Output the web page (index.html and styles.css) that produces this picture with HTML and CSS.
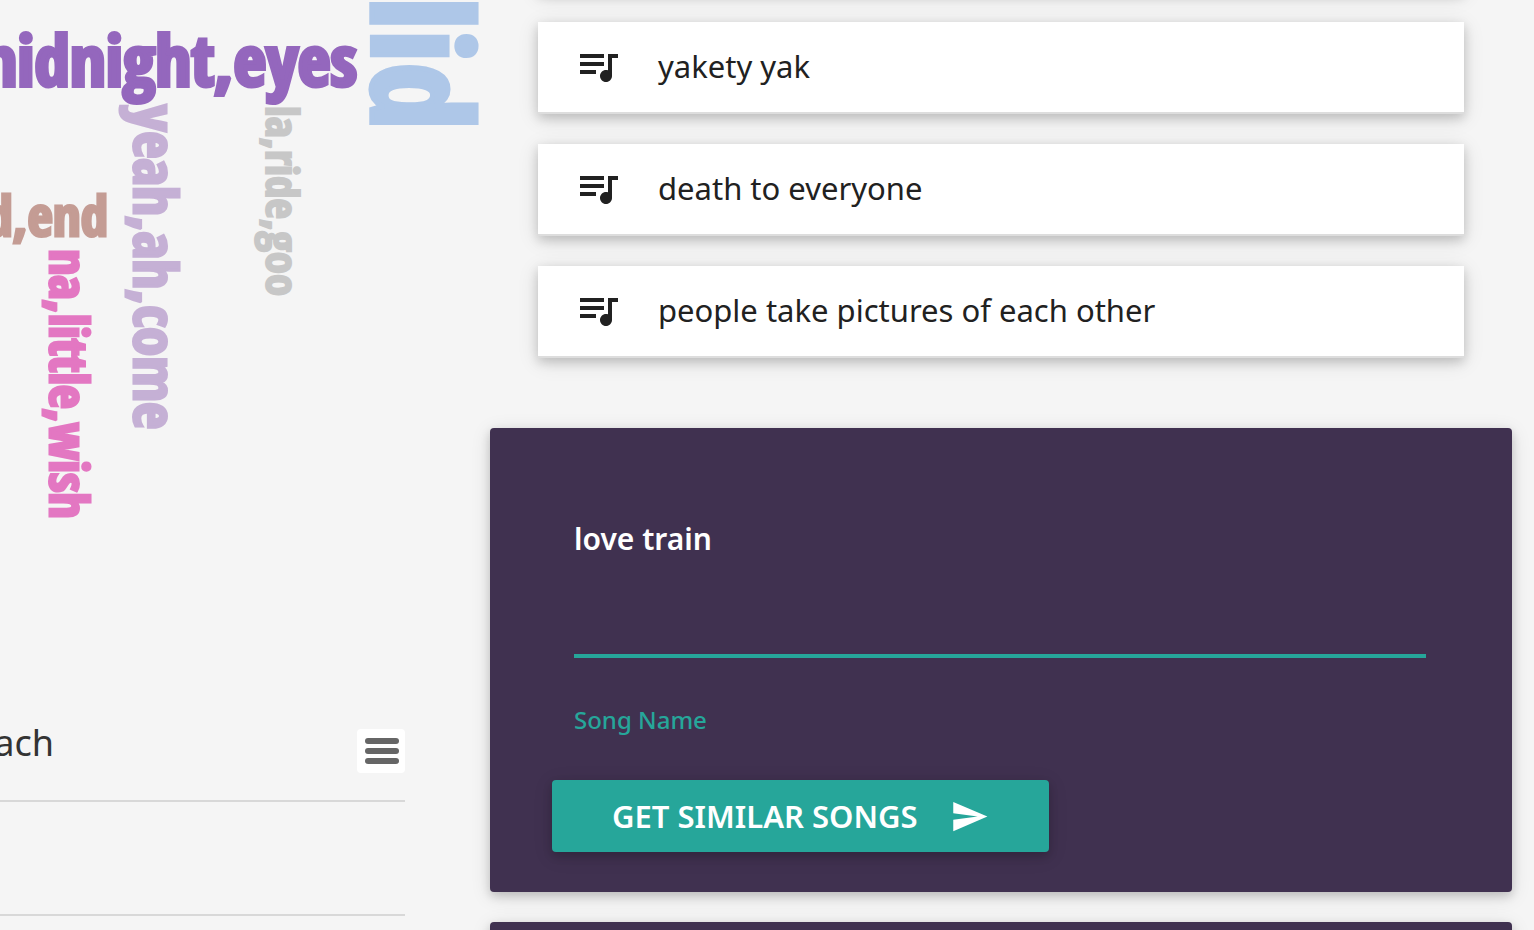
FILE: index.html
```html
<!DOCTYPE html>
<html lang="en">
<head>
<meta charset="utf-8">
<meta name="viewport" content="width=device-width, initial-scale=1">
<title>Similar songs</title>
<link rel="stylesheet" href="styles.css">
</head>
<body>
<svg class="sprite" aria-hidden="true">
  <symbol id="queue" viewBox="0 0 24 24"><path d="M15 6H3v2h12V6zm0 4H3v2h12v-2zM3 16h8v-2H3v2zM17 6v8.18c-.31-.11-.65-.18-1-.18-1.66 0-3 1.34-3 3s1.34 3 3 3 3-1.34 3-3V8h3V6h-5z"/></symbol>
  <symbol id="send" viewBox="0 0 24 24"><path d="M2.01 21L23 12 2.01 3 2 10l15 2-15 2z"/></symbol>
</svg>
<main class="page">
  <section class="insights">
    <svg class="cloud" width="490" height="702" role="img" aria-label="Lyric topics">
      <text class="word purple" x="357" y="86" text-anchor="end">midnight,eyes</text>
      <text class="word brown" x="108" y="236" text-anchor="end">d,end</text>
      <text class="word blue" transform="translate(372 130) rotate(90)" text-anchor="end">lid</text>
      <text class="word lilac" transform="translate(134 105) rotate(90)">yeah,ah,come</text>
      <text class="word grey" transform="translate(266 106) rotate(90)">la,ride,goo</text>
      <text class="word pink" transform="translate(50 249) rotate(90)">na,little,wish</text>
    </svg>
    <div class="chart">
      <header class="chart-head">
        <h2 class="chart-title">ach</h2>
        <button class="menu" type="button" aria-label="Chart menu"><span class="bar"></span><span class="bar"></span><span class="bar"></span></button>
      </header>
      <div class="grid-row"></div>
      <div class="grid-row"></div>
    </div>
  </section>
  <section class="songs">
    <ul class="song-list">
      <li class="song"></li>
      <li class="song"><svg class="song-icon"><use href="#queue"/></svg><span>yakety yak</span></li>
      <li class="song"><svg class="song-icon"><use href="#queue"/></svg><span>death to everyone</span></li>
      <li class="song"><svg class="song-icon"><use href="#queue"/></svg><span>people take pictures of each other</span></li>
    </ul>
    <form class="panel">
      <div class="field">
        <input class="field-input" id="song" type="text" value="love train">
        <label class="field-label" for="song">Song Name</label>
      </div>
      <button class="submit" type="button"><span>GET SIMILAR SONGS</span><svg class="send-icon"><use href="#send"/></svg></button>
    </form>
    <div class="panel"></div>
  </section>
</main>
</body>
</html>
```
FILE: styles.css
```css
* { box-sizing: border-box; }

body {
  margin: 0;
  height: 100vh;
  overflow: hidden;
  background: #f5f5f5;
  color: #212121;
  font-family: "Lucida Grande", "Noto Sans", "Open Sans", sans-serif;
}

.sprite { position: absolute; width: 0; height: 0; }

.page {
  display: grid;
  grid-template-columns: 490px minmax(0, 1fr);
  height: 100vh;
  overflow: hidden;
}

.insights { min-width: 0; }

.cloud { display: block; overflow: hidden; }

.word {
  font-family: Impact, "Open Sans Condensed", "Roboto Condensed", sans-serif;
  font-weight: 900;
  fill: currentColor;
  stroke: currentColor;
  stroke-width: 3px;
}
.purple { color: #9467bd; font-size: 71px; stroke-width: 4px; }
.brown { color: #c49c94; font-size: 55px; }
.blue { color: #aec7e8; font-size: 136px; stroke-width: 5px; }
.lilac { color: #c5b0d5; font-size: 59px; }
.grey { color: #c7c7c7; font-size: 45px; stroke-width: 2px; }
.pink { color: #e377c2; font-size: 52px; }

.chart { width: 405px; }

.chart-head {
  display: flex;
  justify-content: space-between;
  align-items: center;
  height: 100px;
  border-bottom: 2px solid #d8d8d8;
}

.chart-title {
  display: flex;
  justify-content: flex-end;
  width: 54px;
  margin: 0 0 16px;
  color: #333;
  font-size: 36px;
  font-weight: 400;
  line-height: 48px;
}

.menu {
  display: flex;
  flex-direction: column;
  gap: 4px;
  width: 48px;
  height: 44px;
  padding: 9px 6px 9px 8px;
  border: 0;
  border-radius: 4px;
  background: #fff;
}

.bar { height: 6px; border-radius: 3px; background: #666; }

.grid-row { height: 114px; border-bottom: 2px solid #d8d8d8; }

.songs { min-width: 0; padding-right: 22px; }

.song-list {
  display: grid;
  gap: 30px;
  margin: -100px 48px 70px;
  padding: 0;
  list-style: none;
}

.song {
  display: flex;
  align-items: center;
  gap: 36px;
  height: 92px;
  padding: 0 36px 2px;
  border-bottom: 2px solid #ddd;
  background: #fff;
  font-size: 31px;
  line-height: 44px;
}

.song, .panel, .submit {
  box-shadow: 0 4px 10px rgba(0, 0, 0, .16), 0 4px 20px rgba(0, 0, 0, .12);
}

.song-icon { width: 48px; height: 48px; fill: #212121; }

.panel {
  height: 464px;
  margin-bottom: 30px;
  padding: 48px 62px;
  border-radius: 4px;
  background: #403150;
}

.field {
  display: flex;
  flex-direction: column;
  height: 304px;
  padding: 0 24px 0 22px;
}

.field-input {
  width: 100%;
  height: 182px;
  padding: 0 0 54px;
  border: 0;
  border-bottom: 4px solid #26a69a;
  outline: 0;
  background: transparent;
  color: #fff;
  font-family: inherit;
  font-size: 30px;
  font-weight: 600;
}

.field-label {
  margin-top: 44px;
  color: #26a69a;
  font-size: 24px;
  font-weight: 500;
  line-height: 36px;
}

.submit {
  display: flex;
  align-items: center;
  gap: 32px;
  height: 72px;
  padding: 0 60px;
  border: 0;
  border-radius: 4px;
  background: #26a69a;
  color: #fff;
  font-family: inherit;
  font-size: 31px;
  font-weight: 600;
}

.send-icon { width: 39px; height: 39px; fill: #fff; }
```
